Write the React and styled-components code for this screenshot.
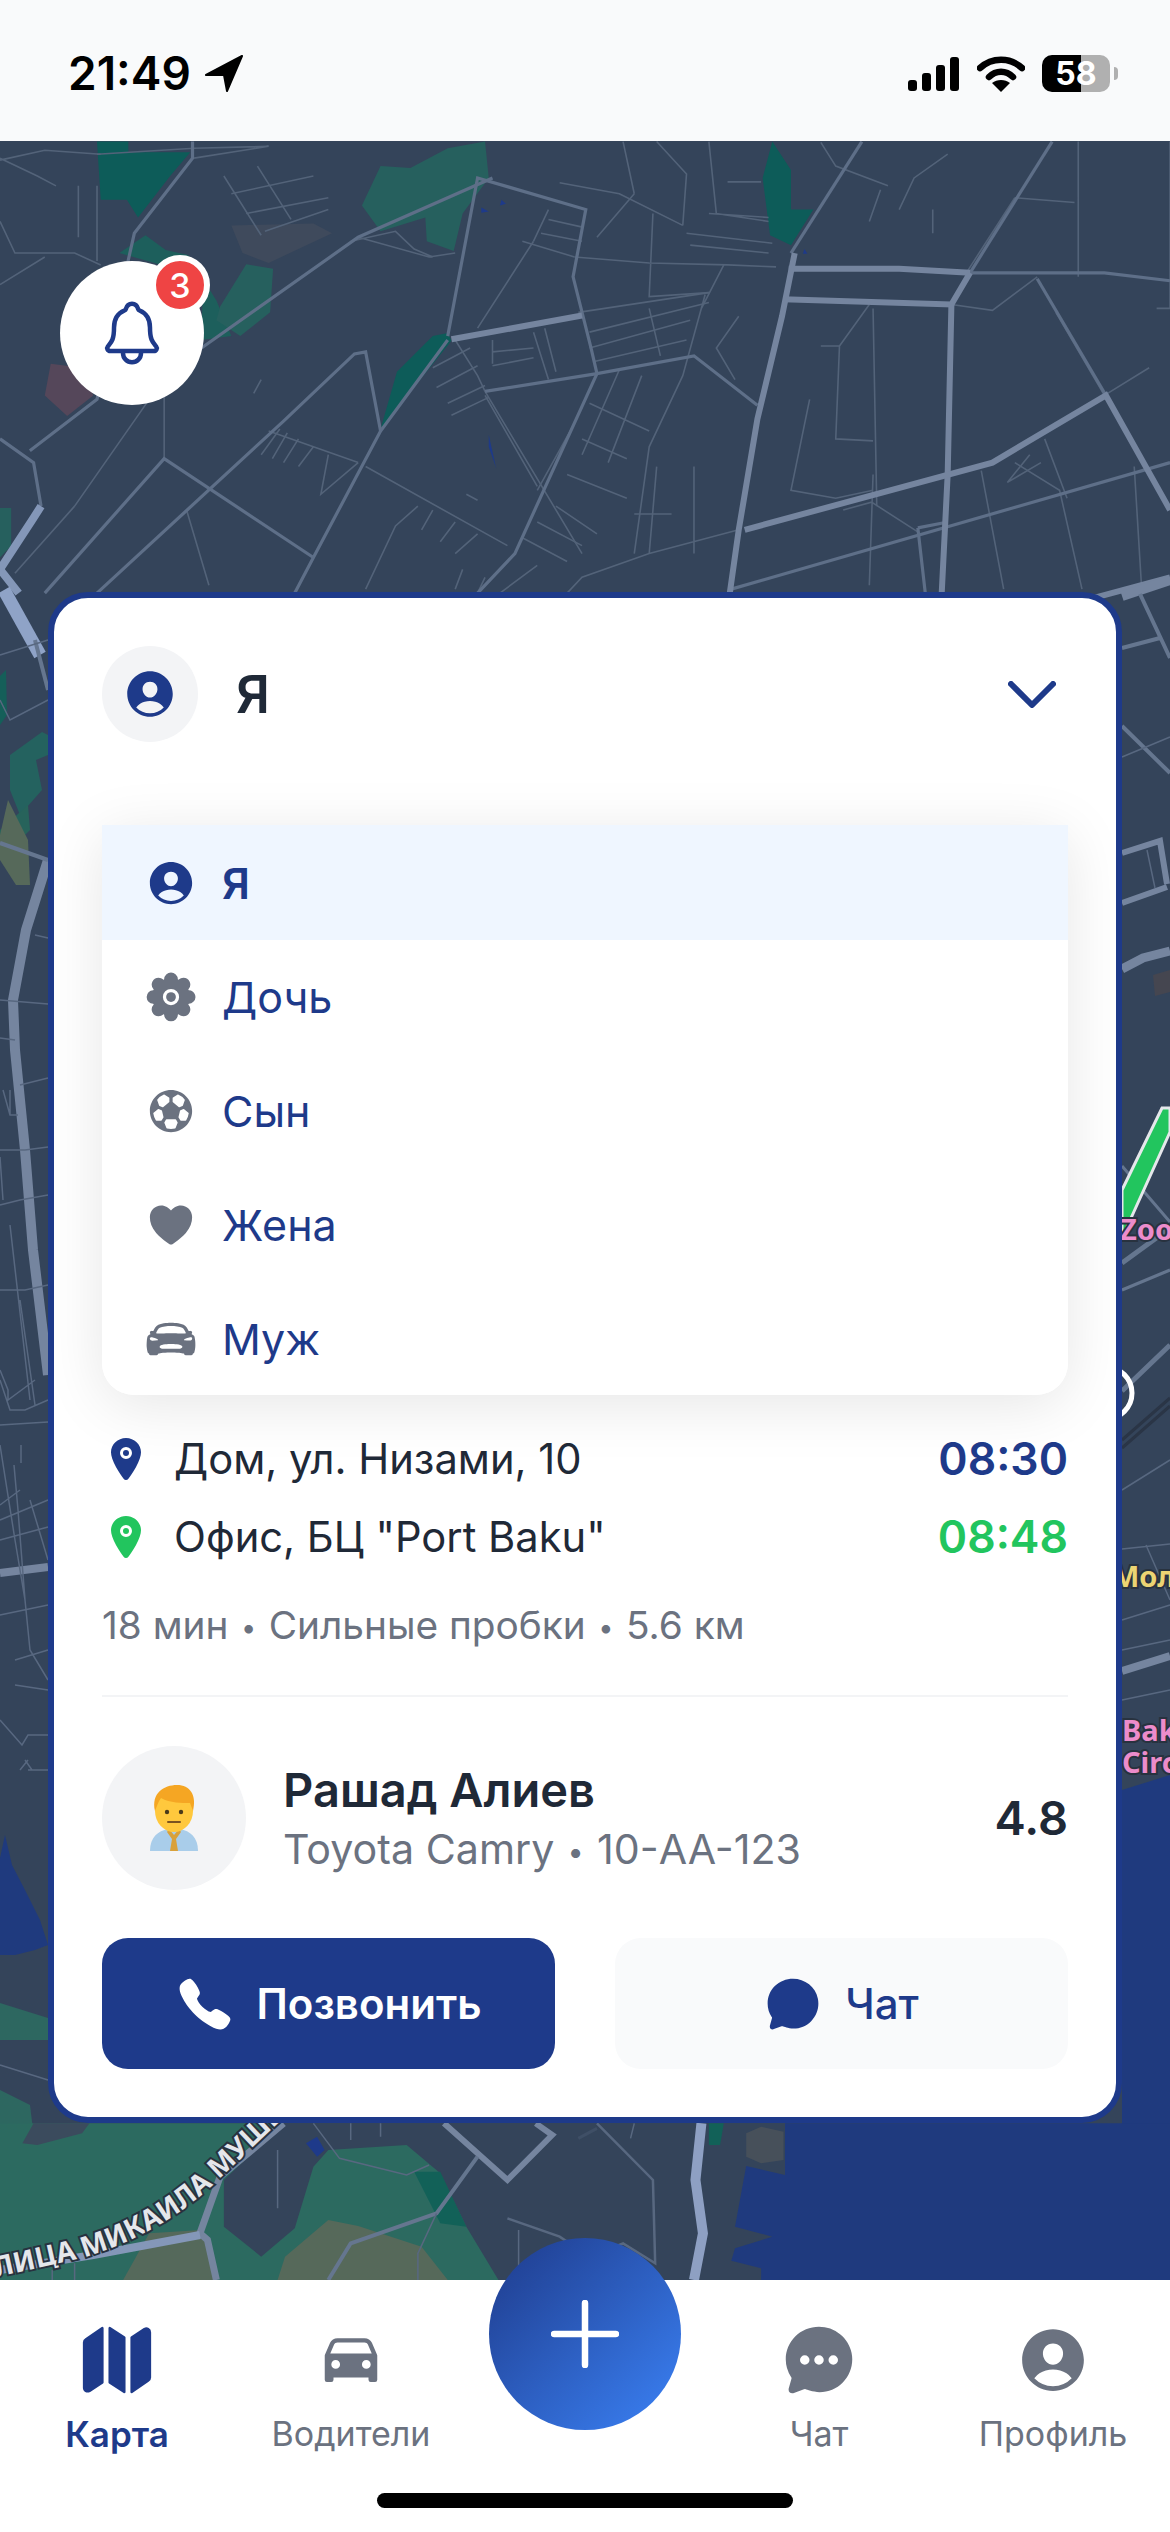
import React from 'react';
import styled, { createGlobalStyle } from 'styled-components';
import {
  IoPersonCircle, IoFlower, IoFootball, IoHeart, IoCarSport, IoLocation, IoCall,
  IoChatbubble, IoChatbubbleEllipses, IoMap, IoCar, IoNotificationsOutline,
} from 'react-icons/io5';

const navy = '#1e3a8a';
const gray = '#6b7280';
const ink = '#1f2937';

const GlobalStyle = createGlobalStyle`
  * { box-sizing: border-box; }
  html, body { margin: 0; padding: 0; background: #fff; }
  body { font-family: Inter, "Noto Sans", sans-serif; }
`;

const Screen = styled.div`
  width: 1170px;
  height: 2532px;
  display: flex;
  flex-direction: column;
  overflow: hidden;
`;

/* status bar */
const StatusBar = styled.div`
  height: 141px;
  background: #f9fafb;
  display: flex;
  align-items: flex-start;
  justify-content: space-between;
  padding: 50px 60px 0 68px;
`;
const Clock = styled.div`
  display: flex;
  align-items: center;
  gap: 14px;
  font-size: 46px;
  line-height: 46px;
  font-weight: 600;
  color: #000;
`;
const StatusIcons = styled.div`
  display: flex;
  align-items: center;
  gap: 17px;
  margin-top: 5px;
`;
const Battery = styled.div`
  width: 68px;
  height: 37px;
  border-radius: 10px;
  background: linear-gradient(90deg, #000 0 39px, #b0b0b0 39px);
  color: #fff;
  font-size: 32px;
  line-height: 37px;
  font-weight: 700;
  text-align: center;
  position: relative;
  &::after {
    content: '';
    position: absolute;
    right: -8px;
    top: 12px;
    width: 4px;
    height: 13px;
    border-radius: 0 4px 4px 0;
    background: #b0b0b0;
  }
`;

/* map */
const MapArea = styled.div`
  position: relative;
  height: 2139px;
  padding: 451px 48px 0;
  background: #34445a;
  overflow: hidden;
`;
const MapArt = styled.svg`
  position: absolute;
  inset: 0;
  width: 1170px;
  height: 2139px;
`;
const MapShapes = styled.g`
  filter: blur(0.5px);
`;
const BellButton = styled.div`
  position: absolute;
  left: 60px;
  top: 120px;
  width: 144px;
  height: 144px;
  border-radius: 50%;
  background: #fff;
  display: flex;
  align-items: center;
  justify-content: center;
  color: ${navy};
  font-size: 72px;
`;
const Badge = styled.span`
  position: absolute;
  left: 90px;
  top: -6px;
  width: 60px;
  height: 60px;
  border-radius: 50%;
  background: #ef4444;
  border: 6px solid #fff;
  color: #fff;
  font-size: 34px;
  font-weight: 500;
  display: flex;
  align-items: center;
  justify-content: center;
`;

/* card */
const Card = styled.section`
  position: relative;
  width: 1074px;
  background: #fff;
  border: 6px solid ${navy};
  border-radius: 40px;
  padding: 48px;
`;
const Header = styled.div`
  display: flex;
  align-items: center;
  height: 96px;
`;
const AvatarCircle = styled.div`
  width: ${p => p.$size}px;
  height: ${p => p.$size}px;
  flex: none;
  border-radius: 50%;
  background: #f3f4f6;
  display: flex;
  align-items: center;
  justify-content: center;
  color: ${navy};
  font-size: 56px;
`;
const HeaderName = styled.div`
  flex: 1;
  margin-left: 38px;
  font-size: 52px;
  font-weight: 600;
  color: ${ink};
`;
const Chevron = styled.svg`
  width: 48px;
  height: 27px;
  margin-right: 12px;
`;
const Dropdown = styled.div`
  margin-top: 83px;
  height: 570px;
  background: #fff;
  border-radius: 0 0 32px 32px;
  box-shadow: 0 10px 60px rgba(0, 0, 0, 0.1);
  overflow: hidden;
`;
const Option = styled.div`
  height: ${p => (p.$active ? 115 : 114)}px;
  display: flex;
  align-items: center;
  padding-left: 41px;
  background: ${p => (p.$active ? '#eff6ff' : '#fff')};
  color: ${navy};
  font-size: 43px;
  font-weight: ${p => (p.$active ? 600 : 400)};
`;
const OptionIcon = styled.span`
  width: 56px;
  margin-right: 23px;
  display: flex;
  justify-content: center;
  font-size: 52px;
  color: ${p => (p.$active ? navy : gray)};
`;
const RouteList = styled.div`
  margin-top: 25px;
`;
const RouteRow = styled.div`
  height: 78px;
  display: flex;
  align-items: center;
`;
const Pin = styled.span`
  width: 48px;
  margin-right: 24px;
  display: flex;
  justify-content: center;
  font-size: 48px;
  color: ${p => p.$color};
`;
const Place = styled.span`
  flex: 1;
  font-size: 41.7px;
  color: ${ink};
`;
const Time = styled.span`
  font-size: 44.5px;
  font-weight: 600;
  color: ${p => p.$color};
`;
const Meta = styled.div`
  margin-top: 24px;
  height: 50px;
  line-height: 50px;
  font-size: 38.8px;
  color: ${gray};
`;
const Dot = styled.span`
  font-size: 0.7em;
  margin: 0 0.46em;
  vertical-align: 0.08em;
`;
const Divider = styled.div`
  margin-top: 45px;
  height: 2px;
  background: #f3f4f6;
`;
const Driver = styled.div`
  margin-top: 49px;
  display: flex;
  align-items: center;
`;
const DriverInfo = styled.div`
  flex: 1;
  margin-left: 37px;
  padding-top: 5px;
`;
const DriverName = styled.div`
  font-size: 47px;
  line-height: 60px;
  font-weight: 600;
  color: ${ink};
`;
const DriverCar = styled.div`
  font-size: 41.2px;
  line-height: 58px;
  color: ${gray};
`;
const Rating = styled.div`
  font-size: 47px;
  font-weight: 600;
  color: ${ink};
  margin-bottom: 2px;
`;
const Actions = styled.div`
  margin-top: 48px;
  display: grid;
  grid-template-columns: 453px 453px;
  justify-content: space-between;
`;
const ActionButton = styled.button`
  height: 131px;
  border: 0;
  border-radius: 26px;
  background: ${p => (p.$primary ? navy : '#f9fafb')};
  color: ${p => (p.$primary ? '#fff' : navy)};
  display: flex;
  align-items: center;
  justify-content: center;
  gap: 23px;
  font-family: inherit;
  font-size: 42px;
  font-weight: ${p => (p.$primary ? 600 : 500)};
  svg { font-size: 58px; }
`;

/* tab bar */
const TabBar = styled.nav`
  height: 252px;
  background: #fff;
  display: flex;
  flex-direction: column;
  align-items: center;
  position: relative;
`;
const TabRow = styled.div`
  width: 100%;
  display: grid;
  grid-template-columns: repeat(5, 1fr);
  padding-top: 46px;
`;
const Tab = styled.div`
  display: flex;
  flex-direction: column;
  align-items: center;
  color: ${p => (p.$active ? navy : gray)};
`;
const TabIcon = styled.span`
  height: 68px;
  display: flex;
  align-items: center;
  font-size: ${p => p.$size || 76}px;
`;
const TabLabel = styled.span`
  margin-top: 19px;
  font-size: ${p => (p.$active ? 35 : 34)}px;
  line-height: 42px;
  font-weight: ${p => (p.$active ? 600 : 400)};
`;
const AddButton = styled.div`
  justify-self: center;
  width: 192px;
  height: 192px;
  margin-top: -88px;
  border-radius: 50%;
  background: linear-gradient(135deg, #1e3a8a, #3b82f6);
  display: flex;
  align-items: center;
  justify-content: center;
`;
const HomeBar = styled.div`
  width: 416px;
  height: 15px;
  margin-top: 38px;
  border-radius: 8px;
  background: #000;
`;

const green = ['#0d5c59', '#26605e', '#1d5f5c', '#2c6a60', '#56695a', '#55475a', '#3f4a5c'];

// coords below: zoom of the top of the map (x*1.34, y*2.53)
const topFills = [
  [0, 'M130 358H172V385H255L228 445L185 550L170 505H135Z'],
  [1, 'M510 420L550 425L600 375L650 358L655 450L620 540L608 635L572 610L570 550L510 585L485 520Z'],
  [0, 'M1035 358L1060 430L1060 530L1090 530L1060 620L1032 595L1022 450Z'],
  [0, 'M580 850L600 842L605 862L510 1085L532 940Z'],
  [2, 'M160 640L195 595L222 632L252 645L290 760L310 850L270 860L272 700Z'],
  [1, 'M295 775L330 668L366 680L362 790L322 850L290 810Z'],
  [6, 'M310 570L420 565L445 590L360 665L325 640Z'],
  [5, 'M68 920L110 930L125 1000L90 1052L60 1000Z'],
  [1, 'M0 1285H15V1380L0 1410Z'],
];
const topThick = [
  'M1057 680H1205L1300 690', 'M1050 757L1275 770L1300 690', 'M1065 640L1048 800L1015 1060L990 1340L978 1500',
  'M1275 770L1270 1200L1262 1500', 'M998 1340L1330 1170L1482 1000L1568 1290',
  'M605 858L780 798', 'M1460 1515L1568 1460',
];
const topMid = [
  'M1060 640L1155 358', 'M1482 1000L1390 705', 'M1300 690H1480L1568 710', 'M1300 690L1410 358',
  'M600 850L640 450L785 530L768 700L792 880L800 945L930 900L1015 1025', 'M650 990L800 945',
  'M600 860L510 1090L420 1410L395 1500', 'M130 1500L380 1065L475 895L490 890L510 1090',
  'M40 1140L130 1010L180 590L258 400V358', 'M270 880L480 600L660 450',
  'M0 1110L45 1170L55 1280', 'M800 945L690 1400L640 1500', 'M420 1410L220 1160L60 1500',
  'M980 1490L1568 1170', 'M1230 1335L1265 1322M1230 1335L1240 1500',
];
const topThin = [
  'M0 400L50 445L75 470M0 405L60 380L135 390M0 560L20 640L100 640L135 670M0 720L60 650',
  'M105 470L105 600M130 470V660M260 400L360 370L260 375L130 390M345 420L390 555M300 445L350 595',
  'M310 490L420 445M330 540L440 500M355 585L440 530',
  'M480 600L575 650L610 640M470 610L530 585L555 630L580 650',
  'M750 462L830 490L915 570M835 358L850 490M880 358L920 440L915 570',
  'M950 358L960 540L1030 560M975 460H1020M950 540L1030 550M920 590L1035 615M925 620L1030 640',
  'M770 650L870 665L975 670L1040 675M875 540L870 750L950 740M800 600L850 490M715 610L640 830',
  'M700 610L770 650M735 530L715 610M735 555L782 575M725 590L780 610',
  'M775 790L950 740M790 840L950 765M790 880L925 810M795 915L920 860',
  'M610 860L640 950L650 990L780 1400M660 860V920M660 890L715 880M660 925L715 905M715 840L735 960M730 830L745 940',
  'M650 1000L720 1230M580 930L630 880M585 980L640 925M600 1020L650 975M605 1050L655 1005',
  'M870 780L885 900M945 745L915 950L870 1130L850 1400M970 670L940 780M990 800L960 880L985 960',
  'M800 945L770 1070L720 1240M830 935L780 1150M860 950L815 1170M790 1020L870 1090M780 1110L840 1160',
  'M760 1200L840 1260M745 1280L800 1350M720 1320L780 1380M700 1360L760 1420',
  'M1100 875L1125 875L1120 1110L1170 1115M1170 780L1175 1280M1125 875L1165 770M1085 1010L1060 1240L1120 1260L1170 1240',
  'M1390 700L1330 785L1275 770M1415 790L1480 1000M1360 500L1295 690M1360 500L1440 512M1445 358V700M1550 780H1568V358',
  'M1360 1170L1420 1240L1450 1490M1315 1190L1345 1490M1400 1110L1430 1260M1520 1180L1530 1490M1480 1000L1540 930',
  'M1230 1345L1168 1270L1130 1290M1170 1200L1165 1480M1380 1150L1350 1220L1395 1170',
  'M1100 360L1120 420L1190 470M1180 480L1165 560M1250 530V590M1270 390L1225 450L1205 530',
  'M360 1090L480 1170M375 1085L350 1150M385 1095L365 1160M400 1110L380 1170M420 1130L400 1180M440 1150L430 1250L480 1170',
  'M220 1000L220 1160M200 1010L100 1280M100 1280L20 1450M350 960L340 995M625 1250L640 1265',
  'M560 1280L530 1330L490 1490M580 1290L565 1340M610 1320L590 1370M640 1350L610 1400M490 1180L680 1380',
  'M250 1290L280 1480M880 1180L870 1400M930 1180V1400M850 1300H900M990 1340L870 1400L780 1460L760 1500',
  'M620 1440L610 1490M650 1460L640 1500M720 1430L670 1500',
];
const topWater = ['M655 1100L665 1185L655 1130Z', 'M645 525L655 535L645 538Z', 'M672 505L678 515L670 520Z', 'M1078 630L1082 642L1076 642Z'];

// coords below: zoom of the bottom of the map (x*1.34, (y-2100)*3)
const bottomFills = [
  ['#2c6a60', 'M0 70H380L300 240L300 380L350 470L395 385L420 200L440 150L545 135L590 220L625 380L668 540H0Z'],
  ['#3b4b5d', 'M0 70H45L30 130L50 135L110 100L120 70Z'],
  ['#56695a', 'M372 540L382 470L440 360L480 378L565 440L600 540Z'],
  ['#55695b', 'M165 540L200 400L270 390L290 540Z'],
  ['#126158', 'M555 215L590 215L625 380L590 370Z'],
  ['#126158', 'M950 70H970L965 135H950Z'],
  ['#47505a', 'M1000 100L1020 80L1050 95L1050 180L1020 190L1000 170Z'],
  ['#1f3a7e', 'M1052 70V225L1000 198L985 380L1035 410L985 445L980 482L1020 505V540H1568V70Z'],
  ['#1e3a8a', 'M410 130L425 110L435 150L425 170Z'],
];
const bottomRoads = [
  ['#75859f', 6, 'M595 70L680 240L740 105L718 70'],
  ['#8ea0c3', 10, 'M940 70L932 240L942 400L930 540'],
  ['#75859f', 7, 'M290 540L278 420L268 400L295 230L380 70'],
  ['#8497b8', 8, 'M0 510L125 465L268 405'],
  ['#65768f', 4, 'M440 540L470 430L585 340L640 170'],
  ['#586880', 2.5, 'M800 70L875 240L878 490L835 430L790 470L750 410L680 355'],
  ['#586880', 1.5, 'M372 150V325M420 70L455 175L545 225L575 195M470 70V120M510 70V110M585 340L560 460V540M695 390V500M100 490V540M70 510V540M850 70L845 115'],
  ['#3f4f66', 3, 'M775 115L800 85'],
];

const leftFills = [
  ['#155f59', 'M0 676L6 670L7 715L0 725Z'],
  ['#24625f', 'M10 755L42 732L48 735V755L36 760L42 790L20 815L10 790Z'],
  ['#27635b', 'M0 830L28 805L30 830L20 840L0 850Z'],
  ['#56695a', 'M0 835L8 800L28 840L30 885L16 885L0 860Z'],
  ['#1f3a7e', 'M0 1858L5 1835L12 1865L25 1890L40 1920L48 1945L35 1950L15 1955H0Z'],
  ['#2d6760', 'M0 2003L48 2018V2040H0Z'],
  ['#2d6760', 'M0 2090L30 2105L33 2130L20 2150H0Z'],
];
const sideRoads = [
  ['#8fa3c7', 13, 'M4 590L40 655'],
  ['#65768f', 4, 'M35 640L48 690'],
  ['#75859f', 10, 'M48 860L26 930L13 1000L15 1050L25 1150L33 1250L48 1375'],
  ['#65768f', 4, 'M0 843L48 860'],
  ['#75859f', 8, 'M0 1573L48 1567'],
  ['#586880', 1.5, 'M0 655L48 640M0 700L10 720L48 700M35 935L48 938M0 1000L48 1004M0 1038L15 1040M20 1085L48 1078M0 1150L25 1150L48 1147M0 1157L3 1200M3 1090L10 1115H18M10 1090V1115M0 1205L20 1200L48 1195M0 1290H25L48 1285M0 1370L8 1390V1400L35 1380M0 1380L10 1410L25 1410L48 1400M20 1300L35 1405M10 1225L30 1400M0 1425L48 1422M21 1463V1445'],
  ['#586880', 1.5, 'M0 1505L20 1490M0 1445L15 1540L25 1600L30 1650L48 1680M14 1465L18 1510L25 1600M0 1520L48 1500M30 1500L48 1560M0 1540L48 1527M0 1615L48 1605M15 1660L48 1650M15 1685L48 1690M0 1720L22 1745L28 1735H48M20 1770L28 1760M25 1760L32 1770H48M28 1770H48M0 2065L48 2080'],
  ['#75859f', 10, 'M1122 596L1170 580'],
  ['#65768f', 4, 'M1122 648L1160 638M1140 594L1170 658M1122 726L1170 773'],
  ['#586880', 1.5, 'M1122 757L1170 737M1147 850L1155 888'],
  ['#75859f', 6, 'M1122 853L1160 841L1167 884M1122 903L1167 887'],
  ['#75859f', 9, 'M1122 969L1143 958L1170 951'],
  ['#65768f', 3, 'M1122 1166L1170 1222M1122 1290L1170 1270'],
  ['#65768f', 5, 'M1122 1263L1170 1228M1122 1391L1170 1345'],
  ['#2a3546', 3, 'M1122 1440L1170 1398M1122 1448L1170 1406'],
  ['#586880', 1.5, 'M1122 1549L1170 1544M1146 1545L1170 1600M1122 1620L1170 1605M1122 1650L1170 1640M1122 1700L1170 1690M1122 1490L1170 1460'],
  ['#75859f', 8, 'M1122 1671L1170 1656'],
];

const MapText = styled.text`
  font-family: "Noto Sans", sans-serif;
  font-size: ${p => p.$size || 29}px;
  font-weight: 700;
  fill: ${p => p.$fill};
  stroke: #28323f;
  stroke-width: 4px;
  paint-order: stroke;
`;

function MapBackground() {
  return (
    <MapArt viewBox="0 141 1170 2139">
      <MapShapes>
        <g transform="scale(0.7462 0.3954)">
          {topFills.map(([c, d], i) => <path key={i} d={d} fill={green[c]} />)}
          {topWater.map((d, i) => <path key={i} d={d} fill={navy} />)}
          {topThin.map((d, i) => <path key={i} d={d} fill="none" stroke="#536379" strokeWidth="1.6" vectorEffect="non-scaling-stroke" />)}
          {topMid.map((d, i) => <path key={i} d={d} fill="none" stroke="#5e6f88" strokeWidth="3.2" vectorEffect="non-scaling-stroke" />)}
          {topThick.map((d, i) => <path key={i} d={d} fill="none" stroke="#75859f" strokeWidth="6" vectorEffect="non-scaling-stroke" />)}
          <path d="M55 1280L45 1310L0 1440L25 1500" fill="none" stroke="#8497b8" strokeWidth="8" vectorEffect="non-scaling-stroke" />
        </g>
        {leftFills.map(([c, d], i) => <path key={i} d={d} fill={c} />)}
        <path d="M1122 1790L1170 1775V2280H1122Z" fill="#1f3a7e" />
        <path d="M1153 975L1170 970V992L1155 996Z" fill="#454650" />
        {sideRoads.map(([c, w, d], i) => <path key={i} d={d} fill="none" stroke={c} strokeWidth={w} />)}
        <path d="M1122 1190L1162 1108H1170V1132L1122 1238Z" fill="#22c55e" stroke="#e5e7eb" strokeWidth="3" />
        <circle cx="1106" cy="1393" r="26" fill="none" stroke="#fff" strokeWidth="5" />
        <g transform="translate(0 2100) scale(0.7462 0.3333)">
          {bottomFills.map(([c, d], i) => <path key={i} d={d} fill={c} />)}
          {bottomRoads.map(([c, w, d], i) => <path key={i} d={d} fill="none" stroke={c} strokeWidth={w} vectorEffect="non-scaling-stroke" />)}
        </g>
      </MapShapes>
      <MapText x="1120" y="1240" $fill="#ec8ccb">Zoo</MapText>
      <MapText x="1112" y="1587" $fill="#ecd473">Мол</MapText>
      <MapText x="1122" y="1741" $fill="#ec8ccb">Bak</MapText>
      <MapText x="1122" y="1773" $fill="#ec8ccb">Circ</MapText>
      {/* the path runs on behind the card, so the whole street name has room on it */}
      <path id="street" d="M-30 2283L82 2258Q160 2235 216 2182L290 2112L440 1970" fill="none" />
      <MapText $size={28} $fill="#e5e7eb">
        <textPath href="#street" startOffset="10">УЛИЦА МИКАИЛА МУШВИГА</textPath>
      </MapText>
    </MapArt>
  );
}

function ManEmoji() {
  return (
    <svg width="52" height="66" viewBox="0 0 52 66">
      <path d="M2 66C2 52 10 46 20 44H32C42 46 50 52 50 66Z" fill="#a9cdea" />
      <path d="M21 44L26 50L31 44L33 47L28 54L30 66H22L24 54L19 47Z" fill="#d9a13a" />
      <ellipse cx="26" cy="26" rx="19" ry="21" fill="#ffc83d" />
      <path d="M7 26C3 8 16 0 29 0C42 0 49 10 45 26L42 18C34 18 22 18 13 13C10 17 9 21 7 26Z" fill="#f5a623" />
      <circle cx="19" cy="27" r="2.2" fill="#4b3a1a" />
      <circle cx="33" cy="27" r="2.2" fill="#4b3a1a" />
      <path d="M20 37H32" stroke="#7a5320" strokeWidth="2" strokeLinecap="round" />
    </svg>
  );
}

const options = [
  { label: 'Я', Icon: IoPersonCircle, active: true },
  { label: 'Дочь', Icon: IoFlower },
  { label: 'Сын', Icon: IoFootball },
  { label: 'Жена', Icon: IoHeart },
  { label: 'Муж', Icon: IoCarSport },
];

export default function App() {
  return (
    <Screen>
      <GlobalStyle />
      <StatusBar>
        <Clock>
          21:49
          <svg width="38" height="37" viewBox="0 0 38 37"><path d="M37 1L1 20H19L22 36Z" fill="#000" stroke="#000" strokeWidth="2" strokeLinejoin="round" /></svg>
        </Clock>
        <StatusIcons>
          <svg width="52" height="34" viewBox="0 0 52 34">
            <rect x="0" y="23" width="9" height="11" rx="3" />
            <rect x="14" y="16" width="9" height="18" rx="3" />
            <rect x="28" y="8" width="9" height="26" rx="3" />
            <rect x="42" y="0" width="9" height="34" rx="3" />
          </svg>
          <svg width="48" height="36" viewBox="0 0 48 36">
            <path d="M3 12C15 1 33 1 45 12" fill="none" stroke="#000" strokeWidth="6.5" strokeLinecap="round" />
            <path d="M12 21C19 14 29 14 36 21" fill="none" stroke="#000" strokeWidth="6.5" strokeLinecap="round" />
            <path d="M24 36L15 27C20 23 28 23 33 27Z" />
          </svg>
          <Battery>58</Battery>
        </StatusIcons>
      </StatusBar>

      <MapArea>
        <MapBackground />
        <BellButton>
          <IoNotificationsOutline />
          <Badge>3</Badge>
        </BellButton>
        <Card>
          <Header>
            <AvatarCircle $size={96}><IoPersonCircle /></AvatarCircle>
            <HeaderName>Я</HeaderName>
            <Chevron viewBox="0 0 48 27">
              <path d="M3 3L24 24L45 3" fill="none" stroke={navy} strokeWidth="6" strokeLinecap="round" strokeLinejoin="round" />
            </Chevron>
          </Header>
          <Dropdown>
            {options.map(({ label, Icon, active }) => (
              <Option key={label} $active={active}>
                <OptionIcon $active={active}><Icon /></OptionIcon>
                {label}
              </Option>
            ))}
          </Dropdown>
          <RouteList>
            <RouteRow>
              <Pin $color={navy}><IoLocation /></Pin>
              <Place>Дом, ул. Низами, 10</Place>
              <Time $color={navy}>08:30</Time>
            </RouteRow>
            <RouteRow>
              <Pin $color="#22c55e"><IoLocation /></Pin>
              <Place>Офис, БЦ "Port Baku"</Place>
              <Time $color="#22c55e">08:48</Time>
            </RouteRow>
          </RouteList>
          <Meta>18 мин<Dot>•</Dot>Сильные пробки<Dot>•</Dot>5.6 км</Meta>
          <Divider />
          <Driver>
            <AvatarCircle $size={144}><ManEmoji /></AvatarCircle>
            <DriverInfo>
              <DriverName>Рашад Алиев</DriverName>
              <DriverCar>Toyota Camry<Dot>•</Dot>10-АА-123</DriverCar>
            </DriverInfo>
            <Rating>4.8</Rating>
          </Driver>
          <Actions>
            <ActionButton $primary><IoCall />Позвонить</ActionButton>
            <ActionButton><IoChatbubble />Чат</ActionButton>
          </Actions>
        </Card>
      </MapArea>

      <TabBar>
        <TabRow>
          <Tab $active>
            <TabIcon $size={78}><IoMap /></TabIcon>
            <TabLabel $active>Карта</TabLabel>
          </Tab>
          <Tab>
            <TabIcon $size={70}><IoCar /></TabIcon>
            <TabLabel>Водители</TabLabel>
          </Tab>
          <AddButton>
            <svg width="68" height="68" viewBox="0 0 68 68">
              <path d="M34 3V65M3 34H65" stroke="#fff" strokeWidth="6.5" strokeLinecap="round" />
            </svg>
          </AddButton>
          <Tab>
            <TabIcon><IoChatbubbleEllipses /></TabIcon>
            <TabLabel>Чат</TabLabel>
          </Tab>
          <Tab>
            <TabIcon><IoPersonCircle /></TabIcon>
            <TabLabel>Профиль</TabLabel>
          </Tab>
        </TabRow>
        <HomeBar />
      </TabBar>
    </Screen>
  );
}
